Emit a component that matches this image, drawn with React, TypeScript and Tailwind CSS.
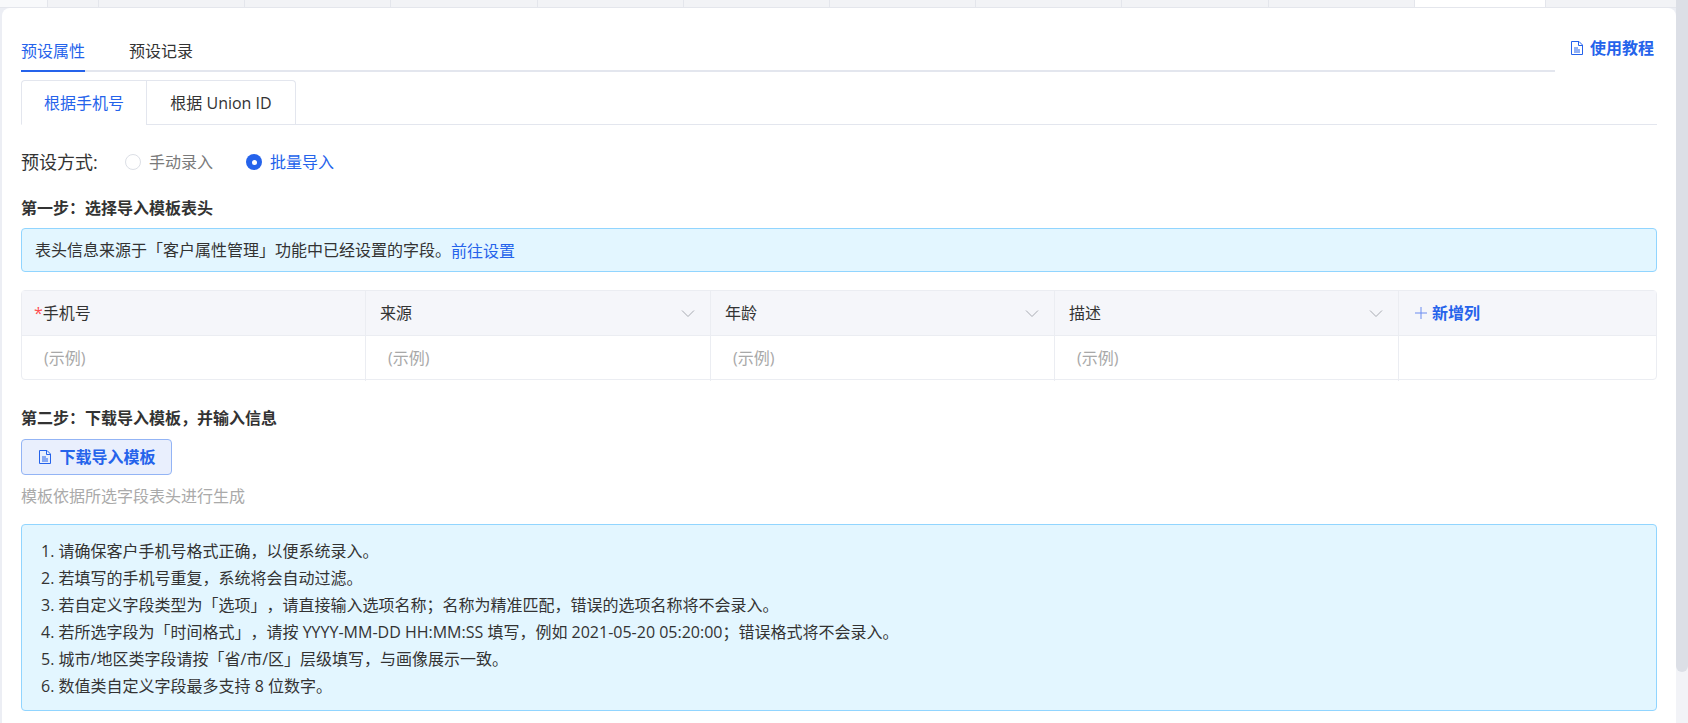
const fileIcon = (
  <svg viewBox="0 0 12 14" className="h-[14px] w-[12px] shrink-0" fill="none" stroke="#2563eb" strokeWidth="1">
    <path d="M.5.5h7.5l3.5 3.5v9.5H.5z" />
    <path d="M7.5.5v4h4" />
    <path d="M3 7h4M3 9h6M3 11h6" />
  </svg>
);

const chevron = (
  <svg viewBox="0 0 14 14" className="h-[14px] w-[14px]" fill="none" stroke="#a8abb2" strokeWidth="1">
    <path d="M1 4.5l6 6 6-6" />
  </svg>
);

const columns = [
  { name: "手机号", required: true },
  { name: "来源" },
  { name: "年龄" },
  { name: "描述" },
];

const tips = [
  "1. 请确保客户手机号格式正确，以便系统录入。",
  "2. 若填写的手机号重复，系统将会自动过滤。",
  "3. 若自定义字段类型为「选项」，请直接输入选项名称；名称为精准匹配，错误的选项名称将不会录入。",
  "4. 若所选字段为「时间格式」，请按 YYYY-MM-DD HH:MM:SS 填写，例如 2021-05-20 05:20:00；错误格式将不会录入。",
  "5. 城市/地区类字段请按「省/市/区」层级填写，与画像展示一致。",
  "6. 数值类自定义字段最多支持 8 位数字。",
];

const App = () => {
  return (
    <div className="flex h-screen overflow-hidden bg-[#eceef4] font-['Open_Sans','Noto_Sans_CJK_SC',sans-serif] text-[16px] text-[#333] [text-spacing-trim:space-all]">
      <div className="flex min-w-0 flex-1 flex-col">
        <div className="grid h-[8px] shrink-0 grid-cols-[48px_51px_repeat(9,146.2px)_131px_1fr] border-b border-[#e4e6ec] bg-[#f2f3f6]">
          <div className="border-r border-[#e4e6ec] bg-[#f8f9fb]" />
          {Array.from({ length: 9 }, (_, i) => (
            <div key={i} className="border-r border-[#e4e6ec]" />
          ))}
          <div className="border-r border-[#e4e6ec]" />
          <div className="border-r border-[#e4e6ec] bg-white" />
        </div>

        <main className="ml-[2px] flex-1 rounded-t-lg bg-white pl-[19px] pr-[19px] pt-[24px]">
          <div className="flex items-start">
            <div className="flex h-[40px] flex-1 gap-[44px] border-b-2 border-[#e3e6ee]">
              <div className="h-[40px] border-b-2 border-[#2563eb] pt-[7px] leading-[24px] text-[#2563eb]">预设属性</div>
              <div className="pt-[7px] leading-[24px]">预设记录</div>
            </div>
            <div className="mt-[4px] flex w-[102px] items-center justify-end gap-[7px] pr-[3px] font-semibold leading-[24px] text-[#2563eb]">
              {fileIcon}
              使用教程
            </div>
          </div>

          <div className="mt-[8px] flex h-[45px] border-b border-[#e3e6ee]">
            <div className="-mb-px flex h-[45px] w-[125px] items-center justify-center rounded-tl border border-r-0 border-[#e3e6ee] border-b-white bg-white text-[#2563eb]">
              根据手机号
            </div>
            <div className="flex h-[44px] w-[150px] items-center justify-center rounded-tr border border-b-0 border-[#e3e6ee]">
              根据 Union ID
            </div>
          </div>

          <div className="mt-[25px] flex h-[24px] items-center">
            <span className="w-[104px] text-[18px]">预设方式:</span>
            <span className="h-[16px] w-[16px] rounded-full border border-[#dcdfe6] bg-white" />
            <span className="ml-[8px] text-[#7a7a7a]">手动录入</span>
            <span className="ml-[33px] flex h-[16px] w-[16px] items-center justify-center rounded-full bg-[#2563eb]">
              <span className="h-[5px] w-[5px] rounded-full bg-white" />
            </span>
            <span className="ml-[8px] text-[#2563eb]">批量导入</span>
          </div>

          <h2 className="mt-[22px] text-[16px] font-bold leading-[24px]">第一步：选择导入模板表头</h2>

          <div className="mt-[8px] flex h-[44px] items-center rounded border border-[#91d5ff] bg-[#e3f6ff] px-[13px]">
            表头信息来源于「客户属性管理」功能中已经设置的字段。
            <span className="mt-[2px] text-[#2563eb]">前往设置</span>
          </div>

          <div className="mt-[18px] grid h-[90px] grid-cols-[344px_345px_344px_344px_1fr] grid-rows-[45px_45px] rounded border border-[#ebedf2]">
            {columns.map((c) => (
              <div
                key={c.name}
                className={
                  c.required
                    ? "flex items-center justify-between border-b border-r border-[#ebedf2] bg-[#f5f6fa] pl-[12px] pr-[15px]"
                    : "flex items-center justify-between border-b border-r border-[#ebedf2] bg-[#f5f6fa] pl-[14px] pr-[15px]"
                }
              >
                <span>
                  {c.required && <span className="text-[#ff4d4f]">*</span>}
                  {c.name}
                </span>
                {!c.required && chevron}
              </div>
            ))}
            <div className="flex items-center gap-[5px] border-b border-[#ebedf2] bg-[#f5f6fa] px-[16px] font-semibold text-[#2563eb]">
              <svg viewBox="0 0 12 12" className="h-[12px] w-[12px]" fill="none" stroke="#6b8cf0" strokeWidth="1">
                <path d="M6 0v12M0 6h12" />
              </svg>
              新增列
            </div>
            {columns.map((c) => (
              <div key={c.name} className="flex items-center border-r border-[#ebedf2] px-[22px] pb-[2px] text-[#a8a8a8]">
                (示例)
              </div>
            ))}
            <div />
          </div>

          <h2 className="mt-[26px] text-[16px] font-bold leading-[24px]">第二步：下载导入模板，并输入信息</h2>

          <button className="mt-[9px] flex h-[36px] w-[151px] items-center justify-center gap-[8px] rounded border border-[#93b4f5] bg-[#e9effd] pl-[2px] font-semibold text-[#2563eb]">
            {fileIcon}
            下载导入模板
          </button>

          <p className="mt-[9px] leading-[24px] text-[#aaa]">模板依据所选字段表头进行生成</p>

          <div className="mt-[16px] rounded border border-[#91d5ff] bg-[#e3f6ff] pb-[10px] pl-[19px] pr-[19px] pt-[13px] leading-[27px]">
            {tips.map((t) => (
              <div key={t}>{t}</div>
            ))}
          </div>
        </main>
      </div>

      <div className="h-full w-[12px] shrink-0 bg-[#f2f3f7]">
        <div className="h-[672px] rounded-b-md bg-[#dcdfe6]" />
      </div>
    </div>
  );
};

export default App;
